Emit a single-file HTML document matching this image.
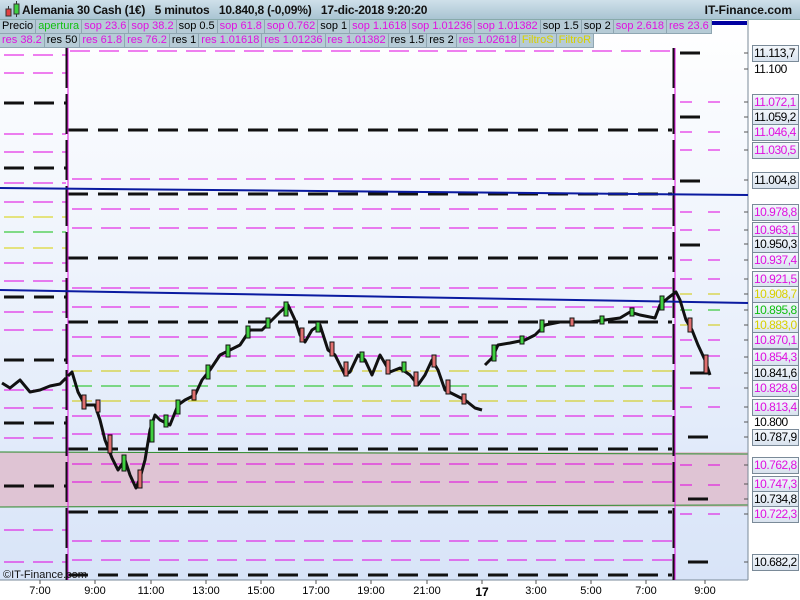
<!DOCTYPE html>
<html><head><meta charset="utf-8"><style>
body{margin:0;width:800px;height:600px;overflow:hidden;font-family:"Liberation Sans",sans-serif;background:#fff;position:relative}
#hdr{position:absolute;left:0;top:0;width:800px;height:20px;background:linear-gradient(#cfe0ea,#a9c4d2);border-bottom:1px solid #8aa;box-sizing:border-box}
#hdr .t{position:absolute;left:22px;top:3px;font-size:12px;font-weight:bold;color:#111;white-space:pre;letter-spacing:-0.2px}
#hdr .r{position:absolute;right:8px;top:3px;font-size:12px;font-weight:bold;color:#111}
.row{position:absolute;left:0;height:14px;display:flex;font-size:11px}
.row span{background:#b6cbd6;border:1px solid #8fa6b2;border-top:none;border-left:none;padding:0 2px;line-height:13px;height:13px}
.m{color:#e010e0}.k{color:#000}.g{color:#10c010}.y{color:#d8d000}
.ax{position:absolute;font-size:12px;height:15px;line-height:15px;width:43px;padding:0 1px;border:1px solid #7a8a98;background:linear-gradient(#f4f8fc,#d8e2ee);left:752px;letter-spacing:-0.5px;white-space:nowrap;overflow:hidden}
.nb{border-color:transparent;background:none}
.tl{position:absolute;top:585px;font-size:11px;transform:translateX(-50%)}
</style></head><body>
<svg width="800" height="600" style="position:absolute;left:0;top:0">
<defs><linearGradient id="bg" x1="0" y1="0" x2="0" y2="1"><stop offset="0" stop-color="#ffffff"/><stop offset="1" stop-color="#d8e4f8"/></linearGradient></defs>
<rect x="0" y="20" width="748" height="560" fill="url(#bg)"/>
<rect x="0" y="452" width="748" height="55" fill="#dfc4d4"/>
<line x1="0" y1="452" x2="748" y2="454" stroke="#2a8a2a"/>
<line x1="0" y1="507" x2="748" y2="505" stroke="#2a8a2a"/>
<line x1="748" y1="20" x2="748" y2="580" stroke="#7a8a98"/>
<line x1="0" y1="580" x2="748" y2="580" stroke="#7a8a98"/>
<line x1="710" y1="23" x2="747" y2="23" stroke="#0000a0" stroke-width="4"/>
<g fill="none" stroke-width="1" stroke-dasharray="20,9">
<g stroke="#e000e0"><path d="M4 55H66M4 73H66M4 134H66M4 152H66M4 183H66M4 202H66M4 263H66M4 281H66M4 312H66M4 330H66M4 390H66M4 408H66M4 438H66M4 530H66M4 562H66"/></g>
<path d="M4 217H66M4 248H66" stroke="#d8d000"/>
<path d="M4 232H66" stroke="#10c010"/>
<g stroke="#e000e0"><path d="M70 51H672M72 179H672M72 209H672M72 228H672M72 288H672M72 307H672M72 337H672M72 356H672M72 416H672M72 434H672M72 464H672M72 482H672M72 541H672M72 560H672"/></g>
<path d="M72 371H672M72 401H672" stroke="#d0c800"/>
<path d="M72 386H672" stroke="#10c010"/>
<g stroke="#e000e0" stroke-dasharray="12,16"><path d="M680 102H720M680 132H720M680 150H720M680 212H720M680 230H720M680 260H720M680 279H720M680 340H720M680 356H720M680 388H720M680 407H720M680 465H720M680 485H720M680 514H720"/></g>
<path d="M680 294H720M680 325H720" stroke="#d0c800" stroke-dasharray="12,16"/>
<path d="M680 310H720" stroke="#10c010" stroke-dasharray="12,16"/>
</g>
<g fill="none" stroke="#111" stroke-width="3" stroke-dasharray="20,10">
<path d="M4 103H66M4 168H66M4 297H66M4 360H66M4 423H66M4 486H66"/>
<path d="M68 130H672M68 194H672M68 258H672M68 322H672M68 449H672M68 512H672M68 575H672"/>
</g>
<g stroke="#111" stroke-width="3" stroke-dasharray="20,14"><path d="M680 53H712M680 117H712M680 181H712M680 245H712M690 373H712M688 437H712M688 499H712M688 562H712"/></g>
<line x1="67" y1="48" x2="67" y2="580" stroke="#111" stroke-width="3" stroke-dasharray="40,6"/>
<line x1="68" y1="48" x2="68" y2="580" stroke="#e010e0" stroke-width="1"/>
<line x1="674" y1="48" x2="674" y2="580" stroke="#111" stroke-width="3" stroke-dasharray="40,6"/>
<line x1="675" y1="48" x2="675" y2="580" stroke="#e010e0" stroke-width="1"/>
<line x1="0" y1="188" x2="748" y2="195" stroke="#0a1aa0" stroke-width="2"/>
<line x1="0" y1="290" x2="748" y2="303" stroke="#0a1aa0" stroke-width="2"/>
<g fill="none" stroke="#111" stroke-width="3" stroke-linejoin="round">
<polyline points="2,383 10,388 20,380 30,392 40,390 50,386 60,384 66,378"/>
<polyline points="68,376 72,372 78,392 85,405 95,405 100,420 105,440 112,458 118,470 125,460 130,475 136,488 140,478 145,460 150,430 155,415 160,420 170,425 178,405 185,400 195,395 202,380 210,370 220,355 230,350 240,345 250,330 262,330 270,322 280,312 288,305 295,320 300,335 305,342 312,330 320,325 328,350 335,355 345,375 350,372 358,355 365,360 372,375 380,355 390,372 400,368 410,375 418,385 425,375 432,360 438,370 445,390 455,395 465,400 475,408 482,410"/>
<polyline points="485,365 492,358 498,345 510,343 525,340 535,335 545,325 560,322 575,322 590,322 605,320 620,318 630,312 640,315 655,318 660,305 668,298 676,292 680,300 686,320 692,330 698,345 705,360 710,375"/>
</g>
<g stroke="#111" stroke-width="1">
<rect x="82" y="395" width="4" height="14" fill="#e07070"/><rect x="96" y="400" width="4" height="12" fill="#e07070"/><rect x="108" y="435" width="4" height="18" fill="#e07070"/><rect x="122" y="455" width="4" height="16" fill="#40d040"/><rect x="138" y="470" width="4" height="18" fill="#e07070"/><rect x="150" y="420" width="4" height="22" fill="#40d040"/><rect x="164" y="415" width="4" height="12" fill="#40d040"/><rect x="176" y="400" width="4" height="14" fill="#40d040"/><rect x="192" y="390" width="4" height="10" fill="#e07070"/><rect x="206" y="365" width="4" height="14" fill="#40d040"/><rect x="226" y="345" width="4" height="12" fill="#40d040"/><rect x="246" y="326" width="4" height="12" fill="#40d040"/><rect x="266" y="318" width="4" height="10" fill="#40d040"/><rect x="284" y="302" width="4" height="14" fill="#40d040"/><rect x="300" y="328" width="4" height="14" fill="#e07070"/><rect x="316" y="322" width="4" height="10" fill="#40d040"/><rect x="330" y="342" width="4" height="14" fill="#e07070"/><rect x="344" y="362" width="4" height="14" fill="#e07070"/><rect x="360" y="352" width="4" height="10" fill="#40d040"/><rect x="386" y="360" width="4" height="14" fill="#e07070"/><rect x="402" y="362" width="4" height="10" fill="#40d040"/><rect x="414" y="372" width="4" height="14" fill="#e07070"/><rect x="432" y="355" width="4" height="12" fill="#e07070"/><rect x="446" y="380" width="4" height="14" fill="#e07070"/><rect x="462" y="394" width="4" height="10" fill="#e07070"/><rect x="492" y="345" width="4" height="16" fill="#40d040"/><rect x="520" y="336" width="4" height="8" fill="#40d040"/><rect x="540" y="320" width="4" height="12" fill="#40d040"/><rect x="570" y="318" width="4" height="8" fill="#e07070"/><rect x="600" y="316" width="4" height="8" fill="#40d040"/><rect x="630" y="308" width="4" height="8" fill="#40d040"/><rect x="660" y="296" width="4" height="14" fill="#40d040"/><rect x="688" y="318" width="4" height="14" fill="#e07070"/><rect x="704" y="355" width="4" height="18" fill="#e07070"/>
</g>
<g stroke="#555"><path d="M744 53H748M744 69H748M744 102H748M744 117H748M744 132H748M744 150H748M744 180H748M744 212H748M744 230H748M744 244H748M744 260H748M744 279H748M744 294H748M744 310H748M744 325H748M744 340H748M744 357H748M744 373H748M744 388H748M744 407H748M744 422H748M744 437H748M744 465H748M744 484H748M744 499H748M744 514H748M744 562H748"/>
<path d="M40 580v4M95 580v4M151 580v4M206 580v4M261 580v4M316 580v4M371 580v4M427 580v4M482 580v4M536 580v4M591 580v4M646 580v4M705 580v4"/></g>
<text x="3" y="578" font-size="11" font-family="Liberation Sans" fill="#111">©IT-Finance.com</text>
</svg>
<div id="hdr"><svg width="20" height="20" style="position:absolute;left:3px;top:0"><rect x="3" y="9" width="5" height="7" fill="#e04040" stroke="#333"/><rect x="11" y="4" width="5" height="10" fill="#40d040" stroke="#333"/><path d="M5.5 6v3M13.5 1v3M13.5 14v3" stroke="#333"/></svg><div class="t">Alemania 30 Cash (1€)   5 minutos   10.840,8 (-0,09%)   17-dic-2018 9:20:20</div><div class="r">IT-Finance.com</div></div>
<div class="row" style="top:20px"><span class="k">Precio</span><span class="g">apertura</span><span class="m">sop 23.6</span><span class="m">sop 38.2</span><span class="k">sop 0.5</span><span class="m">sop 61.8</span><span class="m">sop 0.762</span><span class="k">sop 1</span><span class="m">sop 1.1618</span><span class="m">sop 1.01236</span><span class="m">sop 1.01382</span><span class="k">sop 1.5</span><span class="k">sop 2</span><span class="m">sop 2.618</span><span class="m">res 23.6</span></div>
<div class="row" style="top:34px"><span class="m">res 38.2</span><span class="k">res 50</span><span class="m">res 61.8</span><span class="m">res 76.2</span><span class="k">res 1</span><span class="m">res 1.01618</span><span class="m">res 1.01236</span><span class="m">res 1.01382</span><span class="k">res 1.5</span><span class="k">res 2</span><span class="m">res 1.02618</span><span class="y">FiltroS</span><span class="y">FiltroR</span></div>
<div class="ax k" style="top:45px">11.113,7</div>
<div class="ax k nb" style="top:61px">11.100</div>
<div class="ax m" style="top:94px">11.072,1</div>
<div class="ax k" style="top:109px">11.059,2</div>
<div class="ax m" style="top:124px">11.046,4</div>
<div class="ax m" style="top:142px">11.030,5</div>
<div class="ax k" style="top:172px">11.004,8</div>
<div class="ax m" style="top:204px">10.978,8</div>
<div class="ax m" style="top:222px">10.963,1</div>
<div class="ax k" style="top:236px">10.950,3</div>
<div class="ax m" style="top:252px">10.937,4</div>
<div class="ax m" style="top:271px">10.921,5</div>
<div class="ax y" style="top:286px">10.908,7</div>
<div class="ax g" style="top:302px">10.895,8</div>
<div class="ax y" style="top:317px">10.883,0</div>
<div class="ax m" style="top:332px">10.870,1</div>
<div class="ax m" style="top:349px">10.854,3</div>
<div class="ax k" style="top:365px">10.841,6</div>
<div class="ax m" style="top:380px">10.828,9</div>
<div class="ax m" style="top:399px">10.813,4</div>
<div class="ax k nb" style="top:414px">10.800</div>
<div class="ax k" style="top:429px">10.787,9</div>
<div class="ax m" style="top:457px">10.762,8</div>
<div class="ax m" style="top:476px">10.747,3</div>
<div class="ax k" style="top:491px">10.734,8</div>
<div class="ax m" style="top:506px">10.722,3</div>
<div class="ax k" style="top:554px">10.682,2</div>
<div class="tl" style="left:40px">7:00</div><div class="tl" style="left:95px">9:00</div><div class="tl" style="left:151px">11:00</div><div class="tl" style="left:206px">13:00</div><div class="tl" style="left:261px">15:00</div><div class="tl" style="left:316px">17:00</div><div class="tl" style="left:371px">19:00</div><div class="tl" style="left:427px">21:00</div><div class="tl" style="left:482px;font-weight:bold;font-size:12px">17</div><div class="tl" style="left:536px">3:00</div><div class="tl" style="left:591px">5:00</div><div class="tl" style="left:646px">7:00</div><div class="tl" style="left:705px">9:00</div>
</body></html>
